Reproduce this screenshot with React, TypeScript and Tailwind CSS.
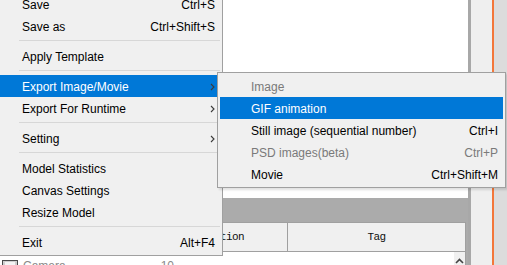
import { clsx } from 'clsx';

type Item =
  | { kind: 'sep' }
  | { kind: 'item'; label: string; shortcut?: string; sub?: boolean; active?: boolean; disabled?: boolean };

const fileMenu: Item[] = [
  { kind: 'item', label: 'Save', shortcut: 'Ctrl+S' },
  { kind: 'item', label: 'Save as', shortcut: 'Ctrl+Shift+S' },
  { kind: 'sep' },
  { kind: 'item', label: 'Apply Template' },
  { kind: 'sep' },
  { kind: 'item', label: 'Export Image/Movie', sub: true, active: true },
  { kind: 'item', label: 'Export For Runtime', sub: true },
  { kind: 'sep' },
  { kind: 'item', label: 'Setting', sub: true },
  { kind: 'sep' },
  { kind: 'item', label: 'Model Statistics' },
  { kind: 'item', label: 'Canvas Settings' },
  { kind: 'item', label: 'Resize Model' },
  { kind: 'sep' },
  { kind: 'item', label: 'Exit', shortcut: 'Alt+F4' },
];

const exportMenu: Item[] = [
  { kind: 'item', label: 'Image', disabled: true },
  { kind: 'item', label: 'GIF animation', active: true },
  { kind: 'item', label: 'Still image (sequential number)', shortcut: 'Ctrl+I' },
  { kind: 'item', label: 'PSD images(beta)', shortcut: 'Ctrl+P', disabled: true },
  { kind: 'item', label: 'Movie', shortcut: 'Ctrl+Shift+M' },
];

function SubArrow() {
  return (
    <svg width="5" height="8" viewBox="0 0 5 8" className="shrink-0">
      <path d="M1 1 L4 4 L1 7" fill="none" stroke="#3a3a3a" strokeWidth="1.1" />
    </svg>
  );
}

function MenuRows({ items, textPad }: { items: Item[]; textPad: string }) {
  return (
    <>
      {items.map((it, i) =>
        it.kind === 'sep' ? (
          <div key={i} className="h-[8px] pt-[3px] pl-[19px]">
            <div className="h-px bg-[#d7d7d7]" />
          </div>
        ) : (
          <div
            key={i}
            className={clsx(
              'h-[22px] flex items-center pr-[5px] pt-[1px] whitespace-nowrap',
              textPad,
              it.active ? 'bg-[#0078d7] text-white' : it.disabled ? 'text-[#7a7a7a]' : 'text-black',
            )}
          >
            <span className="flex-1">{it.label}</span>
            {it.shortcut && <span>{it.shortcut}</span>}
            {it.sub && <SubArrow />}
          </div>
        ),
      )}
    </>
  );
}

export default function App() {
  return (
    <div className="relative w-[507px] h-[265px] overflow-hidden flex bg-white font-['Liberation_Sans',Arial,sans-serif] text-[12px]">
      {/* window behind the menus */}
      <div className="w-[468px] flex flex-col min-h-0">
        <div className="h-[198px] shrink-0 bg-white" />
        <div className="flex-1 min-h-0 bg-[#ababab] pt-[24px] pr-[2px] flex flex-col">
          <div className="flex-1 min-h-0 bg-white flex flex-col border-r border-[#a0a0a0]">
            <div className="h-[30px] shrink-0 flex border-t border-b border-[#a0a0a0] bg-[#f0f0f0] font-['Liberation_Mono',monospace] text-[11px] tracking-[-0.6px] text-[#111]">
              <div className="w-[136px] border-r border-[#a0a0a0]" />
              <div className="w-[152px] border-r border-[#a0a0a0] flex items-center justify-end pr-[43px]">tion</div>
              <div className="flex-1 flex items-center justify-center">Tag</div>
            </div>
            <div className="flex-1 min-h-0 overflow-hidden flex">
              <div className="flex-1 flex items-start pt-[8px] pl-[2px] text-[#8a8a8a]">
                <svg width="16" height="7" viewBox="0 0 16 7" className="shrink-0">
                  <rect x="0.5" y="0.5" width="15" height="6" fill="#cfcfcf" stroke="#4a4a4a" />
                  <rect x="3" y="2" width="10" height="3" fill="#f4f4f4" />
                </svg>
                <span className="ml-[5px] leading-[14px] mt-[-1px]">Camera</span>
                <span className="ml-[95px] leading-[14px] mt-[-1px]">10</span>
              </div>
              <div className="w-[11px] bg-[#f0f0f0] flex justify-center pt-[6px]">
                <svg width="9" height="6" viewBox="0 0 9 6">
                  <path d="M1 5 L4.5 1.5 L8 5" fill="none" stroke="#444" strokeWidth="1.6" />
                </svg>
              </div>
            </div>
          </div>
        </div>
      </div>
      <div className="w-[3px] bg-[#a8a8a8]" />
      <div className="w-[21px] bg-[#efefef]" />
      <div className="w-[2px] bg-[#f3773a]" />
      <div className="flex-1 bg-[#dcdcdc]" />

      {/* File menu */}
      <div className="absolute left-[-3px] top-[-10px] w-[226px] border border-[#a0a0a0] bg-[#f0f0f0] p-[2px]">
        <MenuRows items={fileMenu} textPad="pl-[22px]" />
      </div>

      {/* Export submenu */}
      <div className="absolute left-[217px] top-[72px] w-[289px] border border-[#a0a0a0] bg-[#f0f0f0] p-[2px] shadow-[2px_2px_2px_rgba(0,0,0,0.12)]">
        <MenuRows items={exportMenu} textPad="pl-[31px]" />
      </div>
    </div>
  );
}
